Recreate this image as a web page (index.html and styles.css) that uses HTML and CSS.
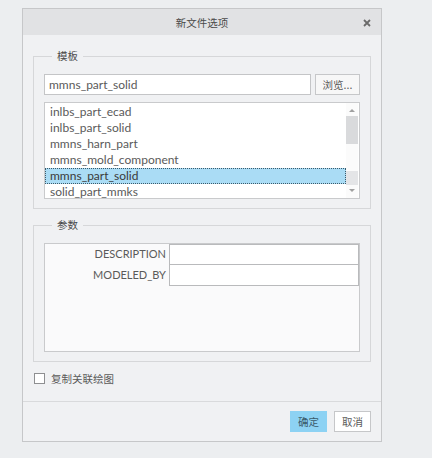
FILE: index.html
```html
<!DOCTYPE html>
<html lang="zh-CN">
<head>
    <meta charset="UTF-8">
    <title>新文件选项</title>
    <link rel="stylesheet" href="styles.css">
</head>
<body>
<div class="dialog">
    <div class="titlebar">
        <span class="title">新文件选项</span>
        <svg class="close" width="8" height="8" viewBox="0 0 8 8">
            <path d="M1 1 L7 7 M7 1 L1 7" stroke="#6a6a6a" stroke-width="1.8"/>
        </svg>
    </div>

    <div class="content">
        <fieldset class="group">
            <legend>模板</legend>
            <div class="template-row">
                <div class="text-input">mmns_part_solid</div>
                <button class="btn browse">浏览...</button>
            </div>
            <div class="listbox">
                <ul class="items">
                    <li>inlbs_part_ecad</li>
                    <li>inlbs_part_solid</li>
                    <li>mmns_harn_part</li>
                    <li>mmns_mold_component</li>
                    <li class="selected">mmns_part_solid</li>
                    <li>solid_part_mmks</li>
                </ul>
                <div class="scrollbar">
                    <span class="arrow up"></span>
                    <span class="thumb"></span>
                    <span class="track-mark"></span>
                    <span class="arrow down"></span>
                </div>
            </div>
        </fieldset>

        <fieldset class="group params">
            <legend>参数</legend>
            <div class="param-box">
                <div class="param-row">
                    <span class="param-name">DESCRIPTION</span>
                    <span class="param-value"></span>
                </div>
                <div class="param-row">
                    <span class="param-name">MODELED_BY</span>
                    <span class="param-value"></span>
                </div>
            </div>
        </fieldset>

        <label class="check">
            <span class="box"></span> 复制关联绘图
        </label>
    </div>

    <div class="footer">
        <button class="btn ok">确定</button>
        <button class="btn cancel">取消</button>
    </div>
</div>
</body>
</html>
```

FILE: styles.css
```css
* {
    box-sizing: border-box;
}
body {
    margin: 0;
    padding: 8px 0 0 22px;
    background-color: #eceef0;
    font-family: Lato, "Noto Sans CJK SC", sans-serif;
    font-size: 12px;
    color: #5a5a5a;
}
.cjk, .title, legend, .btn, .check {
    font-family: "Noto Sans CJK SC", sans-serif;
    font-size: 10.5px;
}
.dialog {
    width: 360px;
    height: 434px;
    background-color: #f0f1f3;
    border: 1px solid #c6c7c9;
    display: flex;
    flex-direction: column;
}
.titlebar {
    height: 26px;
    background-color: #e1e2e4;
    display: flex;
    align-items: center;
    justify-content: center;
    position: relative;
}
.title {
    color: #4a4a4a;
}
.close {
    position: absolute;
    right: 10px;
    top: 10px;
}
.content {
    flex: 1;
    padding: 13px 9px 0 10px;
}
.group {
    margin: 0;
    width: 338px;
    border: 1px solid #d6d7d9;
    padding: 10px 10px 9px 10px;
}
.group legend {
    margin-left: 8px;
    padding: 0 5px;
    line-height: 16px;
    color: #4a4a4a;
}
.template-row {
    display: flex;
    gap: 4px;
}
.text-input {
    width: 267px;
    height: 21px;
    background-color: #fff;
    border: 1px solid #c4c5c7;
    padding-left: 4px;
    line-height: 19px;
    color: #5a5a5a;
}
.btn {
    height: 21px;
    padding: 0;
    border: 1px solid #c6c7c9;
    background-color: #f7f7f7;
    color: #5a5a5a;
}
.browse {
    width: 45px;
}
.listbox {
    margin-top: 7px;
    height: 97px;
    border: 1px solid #c9cacc;
    background-color: #fff;
    display: flex;
    overflow: hidden;
}
.items {
    list-style: none;
    margin: 0;
    padding: 1px 0 0 0;
    flex: 1;
}
.items li {
    height: 16px;
    line-height: 13px;
    padding-left: 4px;
    border: 1px dotted transparent;
    color: #5a5a5a;
}
.items li.selected {
    background-color: #aadcf5;
    border-color: #3c5a6a;
    color: #3a3a3a;
}
.scrollbar {
    width: 12px;
    margin-right: 1px;
    background-color: #fbfbfb;
    position: relative;
}
.arrow {
    position: absolute;
    left: 3px;
    width: 0;
    height: 0;
    border-left: 3px solid transparent;
    border-right: 3px solid transparent;
}
.arrow.up {
    top: 6px;
    border-bottom: 3px solid #a0a0a0;
}
.arrow.down {
    bottom: 6px;
    border-top: 3px solid #a0a0a0;
}
.thumb {
    position: absolute;
    left: 0;
    right: 0;
    top: 13px;
    height: 28px;
    background-color: #d9dadc;
}
.track-mark {
    position: absolute;
    left: 0;
    right: 0;
    top: 68px;
    height: 14px;
    background-color: #e4e5e7;
}
.params {
    margin-top: 8px;
}
.param-box {
    height: 109px;
    border: 1px solid #c9cacc;
    background-color: #fafafb;
}
.param-row {
    display: flex;
    height: 21px;
}
.param-name {
    width: 124px;
    padding-right: 3px;
    text-align: right;
    line-height: 20px;
    font-size: 11px;
    color: #5a5a5a;
}
.param-value {
    flex: 1;
    background-color: #fff;
    border: 1px solid #b9babc;
}
.param-row + .param-row .param-value {
    border-top: none;
}
.check {
    display: flex;
    align-items: center;
    gap: 6px;
    margin: 9px 0 0 1px;
    color: #5a5a5a;
}
.check .box {
    width: 11px;
    height: 11px;
    border: 1px solid #8e8f91;
    background-color: #fff;
}
.footer {
    height: 40px;
    border-top: 1px solid #d9dadc;
    display: flex;
    justify-content: flex-end;
    align-items: center;
    gap: 7px;
    padding: 0 10px 0 0;
}
.ok {
    width: 37px;
    background-color: #8dd2f3;
    border-color: #8dd2f3;
    color: #3a5a6a;
}
.cancel {
    width: 37px;
    background-color: #fff;
}
```
